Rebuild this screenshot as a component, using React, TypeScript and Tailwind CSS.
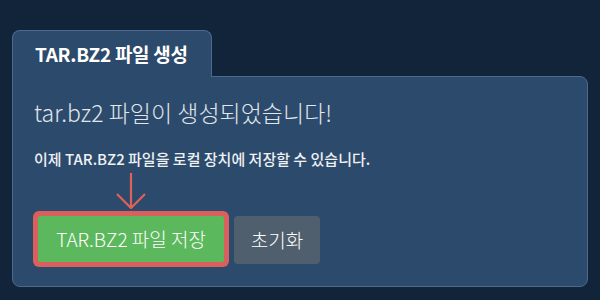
export default function App() {
  return (
    <div
      className="h-[300px] w-[600px] bg-[#12243a] pl-3 pr-[12px] pt-[30px]"
      style={{ fontFamily: '"Noto Sans CJK KR", "Noto Sans", sans-serif' }}
    >
      {/* Tab */}
      <div className="relative z-10 -mb-px flex h-[47px] w-[200px] items-center rounded-t-lg border border-b-0 border-[#4b6a8e] bg-[#2c4a6b] pl-[22px]">
        <span className="text-[19px] font-bold tracking-[-0.3px] text-white">TAR.BZ2 파일 생성</span>
      </div>

      {/* Panel */}
      <div className="h-[211px] w-[576px] rounded-b-lg rounded-tr-lg border border-[#4b6a8e] bg-[#2c4a6b] px-[21px] pt-[20px]">
        <h2 className="text-[23px] font-light leading-[30px] text-[#e1e6ec]">
          tar.bz2 파일이 생성되었습니다!
        </h2>
        <p className="mt-[22px] text-[15px] font-medium leading-[20px] text-[#eef1f4]">
          이제 TAR.BZ2 파일을 로컬 장치에 저장할 수 있습니다.
        </p>

        <svg className="ml-[82px] mt-[4px] block h-[36px] w-[30px]" viewBox="0 0 30 36" fill="none">
          <path d="M15 0 V34 M1 21 L15 35 L29 21" stroke="#e0605a" strokeWidth="2.2" />
        </svg>

        <div className="mt-[7px] flex items-start gap-[10px] pl-[4px]">
          <button className="h-[46px] w-[186px] rounded-[2px] bg-[#5cb85c] text-[19px] font-light text-white ring-[5px] ring-[#d9605c]">
            TAR.BZ2 파일 저장
          </button>
          <button className="h-[48px] w-[86px] rounded bg-[#4f5f6e] text-[19px] font-light text-white">
            초기화
          </button>
        </div>
      </div>
    </div>
  )
}
